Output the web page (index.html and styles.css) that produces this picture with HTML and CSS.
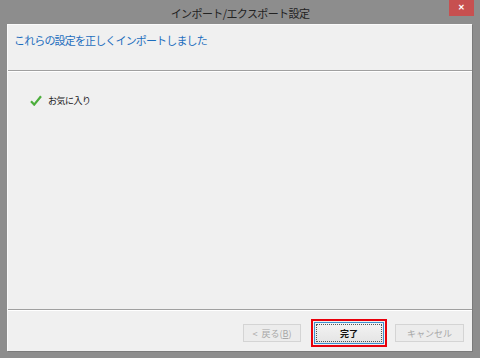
FILE: index.html
```html
<!DOCTYPE html>
<html lang="ja">
<head>
  <meta charset="UTF-8" />
  <title>インポート/エクスポート設定</title>
  <link rel="stylesheet" href="styles.css">
</head>
<body>
  <div class="window">
    <div class="titlebar">
      <span class="title">インポート/エクスポート設定</span>
      <button class="close">&#10005;</button>
    </div>
    <div class="frame">
      <div class="content">
        <div class="header">これらの設定を正しくインポートしました</div>
        <div class="body">
          <div class="item">
            <svg class="check" width="12" height="11" viewBox="0 0 12 11">
              <path d="M1 6.2 L4.2 9.6 L11 1.2" fill="none" stroke="#4cae3c" stroke-width="2.2" />
            </svg>
            <span>お気に入り</span>
          </div>
        </div>
        <div class="footer">
          <button class="btn back" disabled><span class="lt">&lt;</span>戻る(<u>B</u>)</button>
          <div class="focus-mark">
            <button class="btn primary">完了</button>
          </div>
          <button class="btn" disabled>キャンセル</button>
        </div>
      </div>
    </div>
  </div>
</body>
</html>
```
FILE: styles.css
```css
body {
  margin: 0;
  background: #8c8c8c;
  font-family: "Noto Sans CJK JP", "Noto Sans", sans-serif;
}

.window {
  width: 480px;
  height: 358px;
  display: flex;
  flex-direction: column;
  background: #8d8d8d;
}

.titlebar {
  height: 24px;
  position: relative;
  display: flex;
  align-items: center;
  justify-content: center;
}

.title {
  font-size: 11px;
  color: #222;
  letter-spacing: -0.6px;
  margin-top: 2px;
}

.close {
  position: absolute;
  top: 0;
  left: 449px;
  width: 25px;
  height: 16px;
  border: none;
  padding: 0;
  background: #c75050;
  color: #fff;
  font-size: 8px;
  font-weight: bold;
  line-height: 16px;
}

.frame {
  flex: 1;
  display: flex;
  padding: 0 8px 7px 7px;
}

.content {
  flex: 1;
  display: flex;
  flex-direction: column;
  background: #f0f0f0;
  border-left: 1px solid #fafafa;
  border-top: 1px solid #fafafa;
  box-shadow: 1px 1px 0 #7a7a7a;
}

.header {
  height: 46px;
  padding: 7px 0 0 6px;
  box-sizing: border-box;
  color: #1e6ebe;
  font-size: 11px;
  letter-spacing: -0.85px;
  border-bottom: 1px solid #a0a0a0;
  box-shadow: 0 1px 0 #fff;
}

.body {
  flex: 1;
  padding: 23px 0 0 22px;
}

.item {
  display: flex;
  align-items: center;
  gap: 6px;
  font-size: 9px;
  letter-spacing: -0.5px;
  color: #1a1a1a;
}

.footer {
  height: 42px;
  box-sizing: border-box;
  border-top: 1px solid #a0a0a0;
  box-shadow: inset 0 1px 0 #fff;
  display: flex;
  align-items: center;
  justify-content: flex-end;
  padding: 5px 8px 0 0;
  gap: 8px;
}

.btn {
  width: 69px;
  height: 18px;
  padding: 0;
  font-family: "Noto Sans CJK JP", sans-serif;
  font-size: 9px;
  background: #ececec;
  border: 1px solid #d4d4d4;
  color: #a8a8a8;
}

.btn.back {
  width: 58px;
  margin-right: 2px;
}

.lt {
  margin-right: 4px;
}

.btn u {
  text-decoration: underline;
}

.focus-mark {
  border: 2px solid #e8000b;
  padding: 1px;
  display: flex;
}

.btn.primary {
  width: 70px;
  height: 22px;
  color: #111;
  font-weight: bold;
  background: linear-gradient(#f3f3f3, #e4e4e4);
  border: 1px solid #3c8fd0;
  outline: 1px dotted #555;
  outline-offset: -3px;
}
```
